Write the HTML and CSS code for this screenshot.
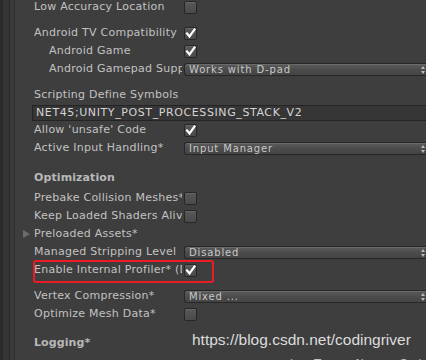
FILE: index.html
```html
<!DOCTYPE html>
<html>
<head>
<meta charset="utf-8">
<link rel="stylesheet" href="styles.css">
</head>
<body>
<div class="app">
  <div class="side">
    <div class="s1"></div><div class="s2"></div><div class="s3"></div><div class="s4"></div><div class="s5"></div>
  </div>
  <div class="main">
    <div class="row first"><span class="label">Low Accuracy Location</span><span class="cb"></span></div>
    <div class="row gap8"><span class="label">Android TV Compatibility</span><span class="cb on"><svg viewBox="0 0 13 13"><path d="M3 6.5 L5.5 9.5 L10.5 2.5" /></svg></span></div>
    <div class="row"><span class="label ind">Android Game</span><span class="cb on"><svg viewBox="0 0 13 13"><path d="M3 6.5 L5.5 9.5 L10.5 2.5" /></svg></span></div>
    <div class="row"><span class="label ind">Android Gamepad Support Level</span><span class="dd">Works with D-pad<i class="arr"></i></span></div>
    <div class="row gap8"><span class="label wide">Scripting Define Symbols</span></div>
    <div class="field">NET45;UNITY_POST_PROCESSING_STACK_V2</div>
    <div class="row"><span class="label">Allow 'unsafe' Code</span><span class="cb on"><svg viewBox="0 0 13 13"><path d="M3 6.5 L5.5 9.5 L10.5 2.5" /></svg></span></div>
    <div class="row"><span class="label">Active Input Handling*</span><span class="dd">Input Manager<i class="arr"></i></span></div>
    <div class="row head gap12"><span class="label wide">Optimization</span></div>
    <div class="row gap2"><span class="label">Prebake Collision Meshes*</span><span class="cb"></span></div>
    <div class="row"><span class="label">Keep Loaded Shaders Alive*</span><span class="cb"></span></div>
    <div class="row"><span class="tri"></span><span class="label">Preloaded Assets*</span></div>
    <div class="row"><span class="label">Managed Stripping Level</span><span class="dd">Disabled<i class="arr"></i></span></div>
    <div class="row mark"><span class="label">Enable Internal Profiler* (Deprecated)</span><span class="cb on"><svg viewBox="0 0 13 13"><path d="M3 6.5 L5.5 9.5 L10.5 2.5" /></svg></span><span class="redbox"></span></div>
    <div class="row gap8"><span class="label">Vertex Compression*</span><span class="dd">Mixed ...<i class="arr"></i></span></div>
    <div class="row"><span class="label">Optimize Mesh Data*</span><span class="cb"></span></div>
    <div class="row head gap11"><span class="label wide">Logging*</span><span class="wm">https://blog.csdn.net/codingriver</span></div>
    <div class="row tail"><span class="label wide">&nbsp;</span><span class="tailtxt">Log Type&nbsp;&nbsp;&nbsp;&nbsp;None&nbsp;&nbsp;&nbsp;&nbsp;ScriptOnly&nbsp;&nbsp;&nbsp;Full</span></div>
  </div>
</div>
</body>
</html>
```

FILE: styles.css
```css
html, body {
  margin: 0;
  padding: 0;
  background: #3e3e3e;
  overflow: hidden;
}
.app {
  display: flex;
  height: 360px;
  overflow: hidden;
  font-family: "DejaVu Sans", sans-serif;
  font-size: 11px;
  letter-spacing: 0.25px;
  color: #c2c2c2;
}
.side {
  display: flex;
  flex: 0 0 15px;
  height: 100%;
}
.s1 { width: 3px; background: #2b2b2b; }
.s2 { width: 6px; background: #363636; }
.s3 { width: 1px; background: #282828; }
.s4 { width: 4px; background: #3a3a3a; }
.s5 { width: 1px; background: #2e2e2e; }
.main {
  flex: 1;
  padding-left: 19px;
  min-width: 0;
  overflow: hidden;
}
.row {
  position: relative;
  display: flex;
  align-items: center;
  height: 18px;
}
.row.first { margin-top: -2px; }
.gap8 { margin-top: 8px; }
.gap12 { margin-top: 12px; }
.gap2 { margin-top: 2px; }
.gap11 { margin-top: 11px; }
.label {
  flex: 0 0 148px;
  width: 148px;
  margin-right: 2px;
  white-space: nowrap;
  overflow: hidden;
  line-height: 18px;
}
.label.ind { padding-left: 15px; flex-basis: 133px; width: 133px; }
.label.wide { flex-basis: auto; width: auto; overflow: visible; }
.head .label { font-weight: bold; color: #b8b8b8; letter-spacing: 0.1px; }
.head.gap11 .label { flex: 0 0 148px; }
.cb {
  flex: 0 0 auto;
  width: 11px;
  height: 11px;
  border: 1px solid #262626;
  border-radius: 2px;
  background: linear-gradient(#585858, #4a4a4a);
  box-shadow: inset 0 1px 0 #666;
  position: relative;
}
.cb svg {
  position: absolute;
  left: -1px;
  top: -1px;
  width: 13px;
  height: 13px;
}
.cb svg path {
  fill: none;
  stroke: #ffffff;
  stroke-width: 2.2;
  stroke-linecap: square;
}
.dd {
  position: relative;
  flex: 0 0 250px;
  height: 13px;
  box-sizing: border-box;
  border: 1px solid #272727;
  border-right: none;
  border-radius: 3px 0 0 3px;
  background: linear-gradient(#5c5c5c, #4c4c4c 50%, #454545);
  box-shadow: inset 0 1px 0 #6a6a6a;
  font-size: 10px;
  line-height: 11px;
  padding-left: 4px;
  color: #c8c8c8;
  letter-spacing: 0.85px;
  white-space: nowrap;
}
.arr {
  position: absolute;
  left: 236px;
  top: 2px;
  width: 0;
  height: 0;
}
.arr::before, .arr::after {
  content: "";
  position: absolute;
  left: 0;
  border-left: 2.5px solid transparent;
  border-right: 2.5px solid transparent;
}
.arr::before { top: 0; border-bottom: 3px solid #bbb; }
.arr::after { top: 5px; border-top: 3px solid #bbb; }
.field {
  margin-top: 1px;
  margin-left: -2px;
  height: 16px;
  box-sizing: border-box;
  border: 1px solid #242424;
  border-right: none;
  background: #363636;
  color: #d4d4d4;
  font-size: 11px;
  line-height: 14px;
  padding-left: 3px;
  letter-spacing: 0.6px;
  white-space: nowrap;
  overflow: hidden;
}
.tri {
  position: absolute;
  left: -11px;
  top: 5px;
  width: 0;
  height: 0;
  border-top: 4px solid transparent;
  border-bottom: 4px solid transparent;
  border-left: 7px solid #6c6c6c;
}
.redbox {
  position: absolute;
  left: -1px;
  top: -1px;
  width: 181px;
  height: 23px;
  box-sizing: border-box;
  border: 2px solid #ec1c24;
  border-radius: 3px;
}
.wm {
  position: absolute;
  left: 158px;
  top: -3px;
  font-family: "Liberation Sans", "Helvetica", sans-serif;
  font-size: 15.5px;
  letter-spacing: 0;
  color: #dcdcdc;
  white-space: nowrap;
}
.tail { margin-top: 0; }
.tailtxt {
  position: absolute;
  left: 256px;
  top: 5px;
  white-space: nowrap;
  color: #c2c2c2;
}
```
